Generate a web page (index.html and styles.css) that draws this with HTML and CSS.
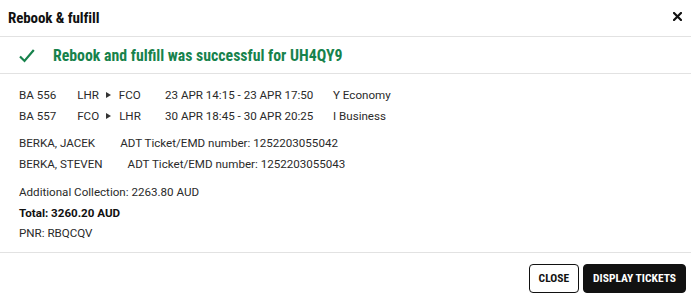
FILE: index.html
```html
<!DOCTYPE html>
<html>
<head>
<meta charset="utf-8">
<link rel="stylesheet" href="styles.css">
</head>
<body>
<div class="dialog">
  <div class="header">
    <h1 class="title">Rebook &amp; fulfill</h1>
    <button class="close-x" aria-label="Close">
      <svg width="9" height="9" viewBox="0 0 9 9"><path d="M1 1L8 8M8 1L1 8" stroke="#111" stroke-width="2.2" stroke-linecap="square"/></svg>
    </button>
  </div>
  <div class="success">
    <svg class="check" width="16" height="14" viewBox="0 0 16 14"><path d="M1 7.5L5.5 12L14.8 1" fill="none" stroke="#17824c" stroke-width="2.2"/></svg>
    <span class="success-text">Rebook and fulfill was successful for UH4QY9</span>
  </div>
  <div class="body">
    <div class="group">
      <div class="flight"><span class="fno">BA 556</span><span class="route">LHR<span class="tri"></span>FCO</span><span class="dates">23 APR 14:15 - 23 APR 17:50</span><span class="cls">Y Economy</span></div>
      <div class="flight"><span class="fno">BA 557</span><span class="route">FCO<span class="tri"></span>LHR</span><span class="dates">30 APR 18:45 - 30 APR 20:25</span><span class="cls">I Business</span></div>
    </div>
    <div class="group">
      <div class="line"><span class="pax">BERKA, JACEK</span>ADT Ticket/EMD number: 1252203055042</div>
      <div class="line"><span class="pax">BERKA, STEVEN</span>ADT Ticket/EMD number: 1252203055043</div>
    </div>
    <div class="group">
      <div class="line">Additional Collection: 2263.80 AUD</div>
      <div class="line bold">Total: 3260.20 AUD</div>
      <div class="line">PNR: RBQCQV</div>
    </div>
  </div>
  <div class="footer">
    <button class="btn btn-outline">CLOSE</button>
    <button class="btn btn-dark">DISPLAY TICKETS</button>
  </div>
</div>
</body>
</html>
```
FILE: styles.css
```css
* { box-sizing: border-box; }
html, body { margin: 0; padding: 0; background: #fff; }
body { font-family: Roboto, "Liberation Sans", sans-serif; color: #222; }
.dialog { width: 691px; height: 300px; display: flex; flex-direction: column; }
.header { flex: 0 0 37px; display: flex; align-items: center; justify-content: space-between; padding: 0 9px 1px 8px; border-bottom: 1px solid #e2e2e2; }
.title { margin: 0; font-size: 15px; font-weight: 700; font-stretch: condensed; letter-spacing: -0.1px; color: #111; }
.close-x { border: 0; background: none; padding: 0; display: flex; margin-bottom: 2px; }
.success { flex: 0 0 37px; display: flex; align-items: center; padding-left: 19px; border-bottom: 1px solid #e2e2e2; }
.check { margin-right: 18px; margin-top: 1px; }
.success-text { font-size: 15.8px; font-weight: 700; color: #17824c; font-stretch: condensed; }
.body { padding: 11px 19px 0; flex: 1 1 auto; border-bottom: 1px solid #e2e2e2; }
.group { margin-bottom: 8px; }
.group:first-child { margin-bottom: 7px; }
.flight, .line { font-size: 11.6px; line-height: 20.5px; color: #2a2a2a; display: flex; align-items: center; white-space: nowrap; }
.flight > span { flex-shrink: 0; }
.fno { width: 34px; }
.route { width: 112px; display: flex; justify-content: center; align-items: center; }
.tri { width: 0; height: 0; border-top: 3.5px solid transparent; border-bottom: 3.5px solid transparent; border-left: 5px solid #333; margin: 0 8px 0 7px; }
.dates { width: 168px; }
.bold { font-weight: 700; color: #111; }
.pax { margin-right: 25px; }
.footer { flex: 0 0 47px; display: flex; justify-content: flex-end; align-items: center; gap: 4px; padding-right: 5px; padding-top: 3px; }
.btn { height: 29px; font-family: Roboto, sans-serif; font-weight: 700; font-size: 11.5px; border-radius: 4px; padding: 0 9px; font-stretch: condensed; }
.btn-outline { background: #fff; color: #111; border: 1px solid #111; }
.btn-dark { background: #111; color: #fff; border: 1px solid #111; }
```
